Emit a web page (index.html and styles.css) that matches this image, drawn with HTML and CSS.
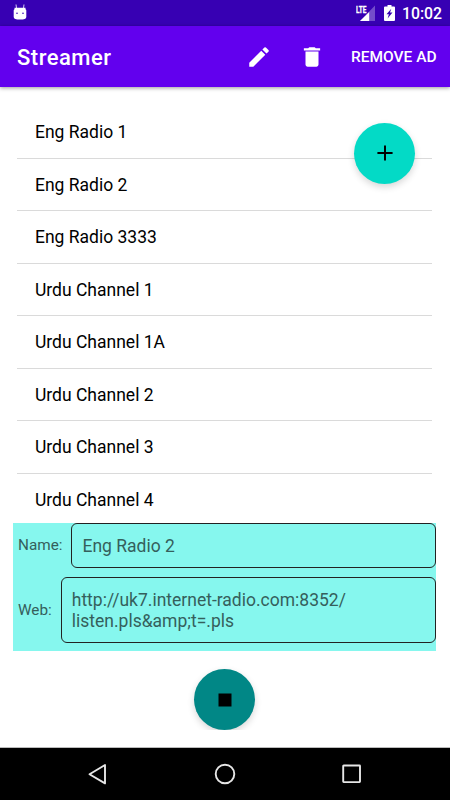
FILE: index.html
```html
<!DOCTYPE html>
<html lang="en">
<head>
<meta charset="utf-8">
<title>Streamer</title>
<link rel="stylesheet" href="styles.css">
</head>
<body>

<div class="status-bar">
	<svg class="robot" width="14" height="17" viewBox="0 0 14 17">
		<path d="M3.600 4.500L3 .5M10.400 4.500L11 .5" stroke="#c9bcec" stroke-width="1.100"/>
		<path d="M1.500 3.700h11v1.500q.8.300.8 1.300v6.500q0 2.600-6.300 2.600T.7 13V6.500q0-1 .8-1.300z" fill="#fff"/>
		<circle cx="4" cy="9.200" r=".8" fill="#3700b3"/>
		<circle cx="10" cy="9.200" r=".8" fill="#3700b3"/>
	</svg>
	<div class="status-icons">
		<svg class="signal" width="20" height="17" viewBox="0 0 20 17">
			<path d="M19 .5V16H4z" fill="#fff" fill-opacity=".3"/>
			<path d="M13.200 7V16H4z" fill="#fff"/>
			<text class="lte" x="0" y="7.500" textLength="10.500" lengthAdjust="spacingAndGlyphs">LTE</text>
		</svg>
		<svg class="battery" width="11" height="17" viewBox="0 0 11 17">
			<path d="M3.500 0h4v1.600H10q1 0 1 1V15q0 1-1 1H1q-1 0-1-1V2.600q0-1 1-1h2.500z" fill="#fff"/>
			<path d="M7.300 3.700L2.500 9.300h2.400l-1.300 4.200 4.900-6H6z" fill="#3700b3"/>
		</svg>
		<span class="clock">10:02</span>
	</div>
</div>

<header class="app-bar">
	<h1>Streamer</h1>
	<svg class="edit" viewBox="0 0 24 24"><path d="M3 17.250V21h3.750L17.810 9.940l-3.750-3.750L3 17.250zM20.710 7.040a1 1 0 0 0 0-1.410l-2.340-2.340a1 1 0 0 0-1.410 0l-1.830 1.830 3.750 3.750 1.830-1.830z"/></svg>
	<svg class="delete" viewBox="0 0 24 24"><path d="M6 19c0 1.100.9 2 2 2h8c1.100 0 2-.9 2-2V7H6v12zM19 4h-3.500l-1-1h-5l-1 1H4.500v2h15V4z"/></svg>
	<span class="action">Remove ad</span>
</header>

<main>
	<ul class="stations">
		<li>Eng Radio 1</li>
		<li>Eng Radio 2</li>
		<li>Eng Radio 3333</li>
		<li>Urdu Channel 1</li>
		<li>Urdu Channel 1A</li>
		<li>Urdu Channel 2</li>
		<li>Urdu Channel 3</li>
		<li>Urdu Channel 4</li>
	</ul>
	<div class="fab add">
		<svg viewBox="0 0 24 24"><path d="M19 12.900h-6.100V19h-1.800v-6.100H5v-1.800h6.100V5h1.800v6.100H19z"/></svg>
	</div>

	<section class="details">
		<div class="row">
			<span class="label">Name:</span>
			<div class="field">Eng Radio 2</div>
		</div>
		<div class="row">
			<span class="label">Web:</span>
			<div class="field url">http://uk7.internet-radio.com:8352/<br>listen.pls&amp;amp;t=.pls</div>
		</div>
	</section>

	<div class="player">
		<div class="fab stop">
			<svg viewBox="0 0 24 24"><path d="M6 6h12v12H6z"/></svg>
		</div>
	</div>
</main>

<nav class="nav-bar">
	<svg width="24" height="24" viewBox="0 0 24 24"><path d="M19 3v18.400L3.500 12.200z"/></svg>
	<svg width="24" height="24" viewBox="0 0 24 24"><circle cx="12" cy="12" r="9.300"/></svg>
	<svg width="24" height="24" viewBox="0 0 24 24"><rect x="3.200" y="3.500" width="16.800" height="16.600" rx=".5"/></svg>
</nav>

</body>
</html>
```

FILE: styles.css
```css
* {
	box-sizing: border-box;
}
body {
	display: flex;
	flex-direction: column;
	width: 450px;
	height: 800px;
	margin: 0;
	overflow: hidden;
	background: #fff;
	color: #000;
	font: 17.5px/1.172 Roboto, sans-serif;
}
svg {
	display: block;
	flex: none;
}

/* status bar */

.status-bar {
	display: flex;
	justify-content: space-between;
	height: 26px;
	padding: 4px 9px 0 13px;
	background: #3700b3;
	color: #fff;
}
.status-icons {
	display: flex;
}
.lte {
	fill: #fff;
	stroke: #fff;
	stroke-width: 0.3px;
	font-size: 9.5px;
	font-weight: 700;
}
.battery {
	margin: 1px 7px 0 8px;
}
.signal {
	margin-top: 1px;
}
.clock {
	width: 39px;
	font-size: 15.8px;
	font-weight: 500;
	line-height: 20px;
	white-space: nowrap;
}

/* app bar */

.app-bar {
	display: flex;
	align-items: center;
	z-index: 1;
	height: 61px;
	padding: 0 13px 0 17px;
	background: #6200ee;
	box-shadow: 0 1px 4px rgba(0,0,0,0.4);
	color: #fff;
}
.app-bar h1 {
	flex: 1;
	margin: 2px 0 0;
	font-size: 22px;
	font-weight: 500;
	letter-spacing: 0.5px;
}
.app-bar svg {
	width: 26px;
	height: 26px;
	fill: #fff;
}
.app-bar .delete {
	margin: 0 26px 0 27px;
}
.action {
	width: 86px;
	padding-top: 2px;
	font-size: 15.5px;
	font-weight: 500;
	text-transform: uppercase;
	white-space: nowrap;
}

/* station list */

main {
	position: relative;
	display: flex;
	flex-direction: column;
	height: 661px;
	padding: 18px 14px 0 13px;
	border-bottom: 1px solid #bbb;
}
.stations {
	height: 417.5px;
	margin: 0 4px;
	padding: 1px 0 0;
	overflow: hidden;
	list-style: none;
}
.stations li {
	height: 52.5px;
	padding-left: 18px;
	border-bottom: 1px solid #dadada;
	line-height: 52.4px;
}

.fab {
	display: flex;
	align-items: center;
	justify-content: center;
	width: 61px;
	height: 61px;
	border-radius: 50%;
	box-shadow: 0 3px 7px rgba(0,0,0,0.16);
}
.fab svg {
	width: 26px;
	height: 26px;
}
.add {
	position: absolute;
	top: 35.5px;
	right: 35px;
	background: #03dac6;
}

/* station details */

.details {
	display: flex;
	flex-direction: column;
	gap: 9px;
	height: 128.5px;
	background: #86f7ee;
	color: #355f5c;
}
.row {
	display: flex;
	align-items: center;
}
.label {
	padding: 2px 9px 0 5px;
	font-size: 15.3px;
}
.field {
	flex: 1;
	height: 45px;
	padding: 12.5px 10px 0;
	border: 1px solid #222;
	border-radius: 6px;
}
.field.url {
	height: 66px;
}

/* player */

.player {
	display: flex;
	justify-content: center;
	height: 79px;
	padding-top: 18px;
	overflow: hidden;
}
.stop {
	background: #018786;
}

/* navigation bar */

.nav-bar {
	display: flex;
	flex: 1;
	align-items: center;
	justify-content: center;
	gap: 103px;
	background: #000;
}
.nav-bar svg {
	fill: none;
	stroke: #e6e6e6;
	stroke-width: 1.9;
	stroke-linejoin: round;
}
```
